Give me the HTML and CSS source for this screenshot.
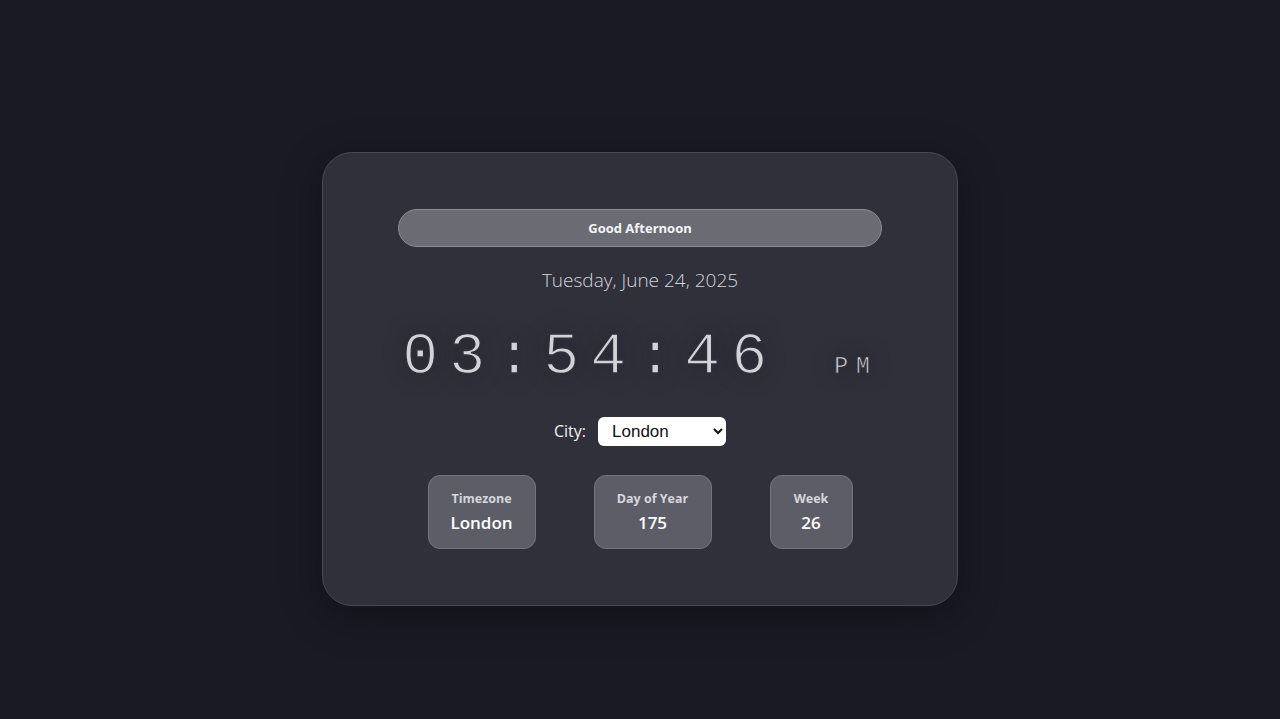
FILE: index.html
```html
<!DOCTYPE html>
<html>
<head>
<meta charset="utf-8">
<link rel="stylesheet" href="styles.css">
</head>
<body>
<div class="page">
  <div class="card">
    <div class="greeting">Good Afternoon</div>
    <div class="date">Tuesday, June 24, 2025</div>
    <div class="clock">
      <span class="time">03:54:46</span>
      <span class="ampm">PM</span>
    </div>
    <div class="city-row">
      <label class="city-label" for="city">City:</label>
      <select id="city" class="city-select">
        <option>London</option>
        <option>New York</option>
        <option>Tokyo</option>
      </select>
    </div>
    <div class="info">
      <div class="info-card tz">
        <div class="info-label">Timezone</div>
        <div class="info-value">London</div>
      </div>
      <div class="info-card doy">
        <div class="info-label">Day of Year</div>
        <div class="info-value">175</div>
      </div>
      <div class="info-card wk">
        <div class="info-label">Week</div>
        <div class="info-value">26</div>
      </div>
    </div>
  </div>
</div>
</body>
</html>
```

FILE: styles.css
```css
html, body {
  margin: 0;
  padding: 0;
  height: 100%;
}
body {
  background: #1a1a25;
  font-family: "Open Sans", "Noto Sans", sans-serif;
  color: #fff;
}
.page {
  height: 719px;
  box-sizing: border-box;
  padding-top: 38px;
  display: flex;
  align-items: center;
  justify-content: center;
}
.card {
  width: 636px;
  box-sizing: border-box;
  padding: 56px 75px 56px 75px;
  background: #30303b;
  border: 1px solid #4a4a55;
  border-radius: 30px;
  box-shadow: 0 10px 40px rgba(0,0,0,0.35);
  display: flex;
  flex-direction: column;
  align-items: center;
}
.greeting {
  width: 100%;
  box-sizing: border-box;
  height: 38px;
  display: flex;
  align-items: center;
  justify-content: center;
  background: #6b6b74;
  border: 1px solid #8b8b94;
  border-radius: 19px;
  font-size: 13px;
  font-weight: 700;
  color: #f4f4f6;
}
.date {
  margin-top: 19px;
  font-family: "Open Sans", sans-serif;
  font-weight: 300;
  font-size: 19px;
  color: #d4d4dc;
  line-height: 28px;
}
.clock {
  margin-top: 23px;
  display: flex;
  align-items: baseline;
  font-family: "Liberation Mono", "Courier New", monospace;
  color: #d2d2d8;
  text-shadow: 0 0 20px rgba(20,20,30,0.5);
  line-height: 80px;
}
.time {
  font-size: 60px;
  letter-spacing: 11px;
  -webkit-text-stroke: 1.5px #30303b;
}
.ampm {
  font-size: 23px;
  letter-spacing: 8px;
  margin-left: 56px;
  -webkit-text-stroke: 0.6px #30303b;
}
.city-row {
  margin-top: 10px;
  display: flex;
  align-items: center;
  gap: 12px;
}
.city-label {
  font-size: 16px;
  color: #f0f0f4;
}
.city-select {
  width: 128px;
  height: 29px;
  font-family: "Liberation Sans", Arial, sans-serif;
  font-size: 17px;
  border: none;
  border-radius: 6px;
  background: #fff;
  color: #111;
  padding: 0 6px 0 10px;
}
.info {
  margin-top: 29px;
  display: flex;
  gap: 58px;
}
.info-card {
  height: 74px;
  box-sizing: border-box;
  background: #5d5d67;
  border: 1px solid #75757f;
  border-radius: 12px;
  display: flex;
  flex-direction: column;
  align-items: center;
  justify-content: center;
  gap: 4px;
  padding-top: 1px;
}
.tz { width: 108px; }
.doy { width: 118px; }
.wk { width: 83px; }
.info-label {
  font-size: 12.5px;
  font-weight: 700;
  color: #d6d6dc;
}
.info-value {
  font-size: 17px;
  font-weight: 600;
  color: #fff;
}
```
